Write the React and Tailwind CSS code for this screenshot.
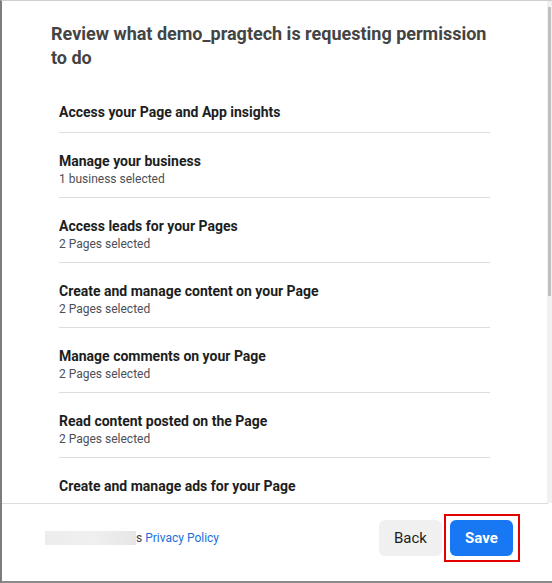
import React from "react";

const items = [
  { t: "Access your Page and App insights" },
  { t: "Manage your business", s: "1 business selected" },
  { t: "Access leads for your Pages", s: "2 Pages selected" },
  { t: "Create and manage content on your Page", s: "2 Pages selected" },
  { t: "Manage comments on your Page", s: "2 Pages selected" },
  { t: "Read content posted on the Page", s: "2 Pages selected" },
  { t: "Create and manage ads for your Page" },
];

export default function App() {
  return (
    <div
      className="w-[552px] h-[583px] bg-white flex flex-col border-l-2 border-l-[#7d7d7d] border-t border-t-[#cfcfcf] border-b-2 border-b-[#8a8a8a] overflow-hidden relative"
      style={{ fontFamily: "Roboto, 'Liberation Sans', sans-serif" }}
    >
      <div className="h-[502px] overflow-hidden relative">
        <div className="pl-[49px] pr-[60px] pt-[21px]">
          <h1 className="text-[18px] leading-[24px] font-bold text-[#444]">
            Review what demo_pragtech is requesting permission to do
          </h1>
        </div>
        <div className="ml-[57px] w-[431px] mt-[13px]">
          {items.map((it, i) => (
            <div
              key={i}
              className={
                (i < items.length - 1 ? "border-b border-[#dadde1] " : "") +
                (i === 0 ? "pt-[20px] pb-[11px]" : "pt-[19px] pb-[9px]")
              }
            >
              <div className="text-[14px] leading-[18px] font-bold text-[#1c1e21]">{it.t}</div>
              {it.s && (
                <div className="text-[12px] leading-[18px] text-[#4b4f56]">{it.s}</div>
              )}
            </div>
          ))}
        </div>
        <div className="absolute right-0 top-0 bottom-0 w-[5px] bg-[#f1f1f1]">
          <div className="mt-[6px] ml-[1px] w-[3px] h-[289px] bg-[#c1c1c1]" />
        </div>
      </div>
      <div className="border-t border-[#dadde1] mr-[4px]" />
      <div className="flex-1 flex items-start justify-between pl-[43px] pr-[39px] pt-[16px]">
        <div className="flex items-center h-[36px] text-[12px] text-[#444]">
          <div className="w-[91px] h-[14px] bg-gradient-to-r from-[#ececec] via-[#f0f0f0] to-[#e6e6e6] blur-[0.5px]" />
          <span>s&nbsp;</span>
          <span className="text-[#216fdb]">Privacy Policy</span>
        </div>
        <div className="flex items-center gap-[8px]">
          <button className="w-[63px] h-[36px] rounded-[6px] bg-[#f0f0f0] text-[15px] text-[#1c1e21]">
            Back
          </button>
          <div className="relative">
            <button className="w-[63px] h-[36px] rounded-[6px] bg-[#1877f2] text-[15px] font-bold text-white">
              Save
            </button>
            <div className="absolute -left-[6px] -right-[7px] -top-[6px] -bottom-[6px] border-2 border-[#e50000] pointer-events-none" />
          </div>
        </div>
      </div>
    </div>
  );
}
